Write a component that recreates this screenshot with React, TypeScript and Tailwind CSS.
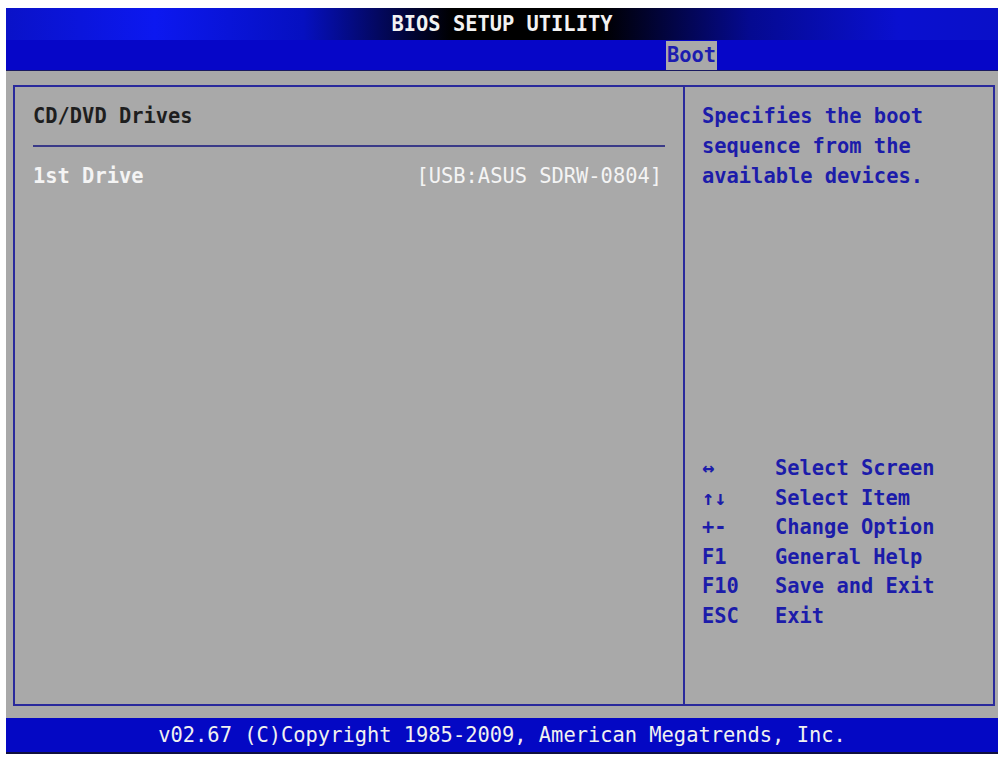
import React from "react";

const keys: [string, string][] = [
  ["↔", "Select Screen"],
  ["↑↓", "Select Item"],
  ["+-", "Change Option"],
  ["F1", "General Help"],
  ["F10", "Save and Exit"],
  ["ESC", "Exit"],
];

const App: React.FC = () => {
  return (
    <div
      className="w-[1001px] h-[759px] bg-white pt-[8px] pl-[6px] pr-[3px] pb-[5px] text-[20.4px] font-bold"
      style={{ fontFamily: '"DejaVu Sans Mono", "Liberation Mono", monospace' }}
    >
      <div className="flex flex-col h-full bg-[#a9a9a9]">
        {/* Title bar */}
        <div className="h-[32px] flex items-center justify-center text-[#f2f2f2] bg-[linear-gradient(90deg,#0a12c8_0%,#0c18f0_15%,#0610c0_30%,#000000_45%,#000000_60%,#050a90_75%,#0a10d0_90%,#0a10c8_100%)]">
          BIOS SETUP UTILITY
        </div>

        {/* Tab bar */}
        <div className="h-[31px] flex items-end bg-[#0606c8] pl-[660px] border-b border-[#1a1a60]">
          <div className="h-[29px] px-[1px] flex items-center bg-[#a9a9a9] text-[#1c1cb0]">
            Boot
          </div>
        </div>

        {/* Main panels */}
        <div className="flex-1 pl-[7px] pr-[3px] pt-[14px] pb-[12px]">
          <div className="h-full flex border-2 border-[#2a2a9c]">
            <div className="flex-1 px-[18px] pt-[14px] border-r-2 border-[#2a2a9c]">
              <div className="leading-[30px] text-[#1e1e1e]">CD/DVD Drives</div>
              <div className="h-[2px] bg-[#3a3a88] mt-[14px]" />
              <div className="flex justify-between leading-[30px] mt-[14px] text-[#f4f4f4] pr-[3px]">
                <span>1st Drive</span>
                <span className="font-normal">[USB:ASUS SDRW-0804]</span>
              </div>
            </div>

            <div className="w-[308px] flex flex-col pl-[17px] pt-[14px] pb-[73px] text-[#1c1caa]">
              <div className="leading-[30px]">
                <div>Specifies the boot</div>
                <div>sequence from the</div>
                <div>available devices.</div>
              </div>
              <div className="mt-auto leading-[29.5px]">
                {keys.map(([k, label]) => (
                  <div key={k} className="flex">
                    <span className="w-[73px]">{k}</span>
                    <span>{label}</span>
                  </div>
                ))}
              </div>
            </div>
          </div>
        </div>

        {/* Footer */}
        <div className="h-[36px] flex items-center justify-center bg-[#0408c4] text-[#f0f0f0] font-normal border-b-2 border-[#101040]">
          v02.67 (C)Copyright 1985-2009, American Megatrends, Inc.
        </div>
      </div>
    </div>
  );
};

export default App;
